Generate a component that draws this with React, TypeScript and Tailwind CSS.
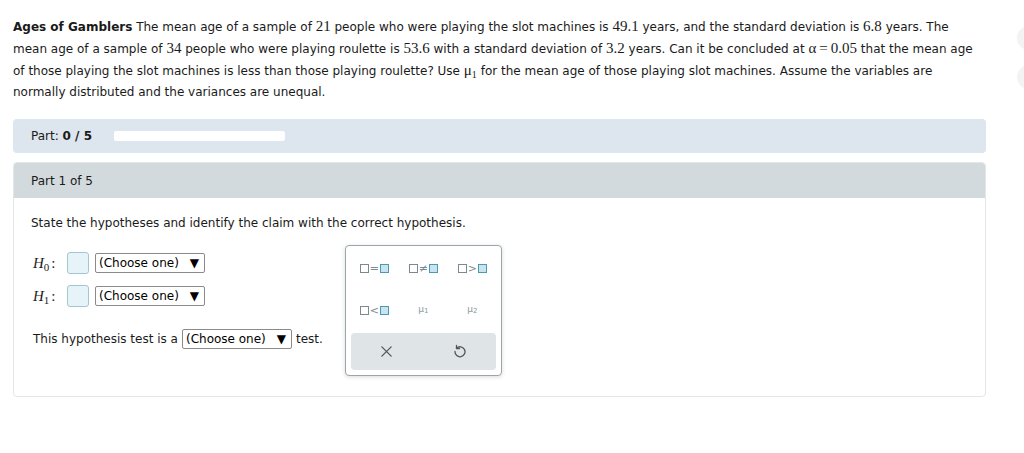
import React from "react";

const sans = { fontFamily: '"DejaVu Sans", Verdana, sans-serif' };
const serif = { fontFamily: '"Liberation Serif", "Times New Roman", serif' };

function N({ children }: { children: React.ReactNode }) {
  return (
    <span className="text-[15px]" style={serif}>
      {children}
    </span>
  );
}

function Select() {
  return (
    <div className="flex h-[20px] w-[110px] items-center justify-between rounded-[2px] border border-[#8a8a8a] bg-white pl-[3px] pr-[5px] text-[12px] text-black">
      <span>(Choose one)</span>
      <span className="text-[12px]">▼</span>
    </div>
  );
}

function Box() {
  return <div className="h-[22px] w-[22px] rounded-[3px] border border-[#a3c6d4] bg-[#e6f3f8]" />;
}

function Sq({ filled }: { filled?: boolean }) {
  return filled ? (
    <span className="inline-block h-[9px] w-[9px] border-[1.5px] border-[#4b9ab3] bg-[#c9e4ee]" />
  ) : (
    <span className="inline-block h-[9px] w-[9px] border-[1.5px] border-[#7b8a90] bg-white" />
  );
}

function Rel({ sym }: { sym: string }) {
  return (
    <div className="flex items-center justify-center gap-[1px] text-[11px] leading-none text-[#7b8a90]">
      <Sq />
      <span className="w-[9px] text-center">{sym}</span>
      <Sq filled />
    </div>
  );
}

function Mu({ sub }: { sub: string }) {
  return (
    <div className="flex items-center justify-center text-[9px] leading-none text-[#8a979c]">
      μ<span className="text-[7px] translate-y-[2px]">{sub}</span>
    </div>
  );
}

function H({ sub }: { sub: string }) {
  return (
    <div className="flex w-[34px] items-center text-[15px]" style={serif}>
      <span className="italic">H</span>
      <span className="text-[11px] translate-y-[4px]">{sub}</span>
      <span className="ml-[2px]">:</span>
    </div>
  );
}

export default function App() {
  return (
    <div className="relative h-[453px] w-[1024px] overflow-hidden bg-white text-[12px] text-[#1a1a1a]" style={sans}>
      <div className="absolute left-[1017px] top-[26px] h-[24px] w-[24px] rounded-full bg-[#f3f3f3]" />
      <div className="absolute left-[1017px] top-[65px] h-[24px] w-[24px] rounded-full bg-[#f3f3f3]" />

      <div className="px-[13px] pt-[16px]">
        <div className="whitespace-nowrap leading-[21px]">
          <div>
            <b>Ages of Gamblers</b> The mean age of a sample of <N>21</N> people who were playing the slot machines is{" "}
            <N>49.1</N> years, and the standard deviation is <N>6.8</N> years. The
          </div>
          <div>
            mean age of a sample of <N>34</N> people who were playing roulette is <N>53.6</N> with a standard deviation
            of <N>3.2</N> years. Can it be concluded at <N>α&#8201;=&#8201;0.05</N> that the mean age
          </div>
          <div>
            of those playing the slot machines is less than those playing roulette? Use{" "}
            <span style={serif} className="text-[15px]">
              μ<span className="relative top-[3px] text-[10px]">1</span>
            </span>{" "}
            for the mean age of those playing slot machines. Assume the variables are
          </div>
          <div>normally distributed and the variances are unequal.</div>
        </div>

        <div className="mt-[16px] flex h-[34px] w-[973px] items-center rounded-[4px] bg-[#dde6ee] pl-[18px]">
          <span>
            Part: <b>0 / 5</b>
          </span>
          <div className="ml-[22px] h-[10px] w-[171px] rounded-[2px] bg-white" />
        </div>

        <div className="mt-[9px] h-[235px] w-[973px] overflow-hidden rounded-[4px] border border-[#e3e7e8]">
          <div className="flex h-[35px] items-center bg-[#d3dadd] pl-[17px]">Part 1 of 5</div>
          <div className="pl-[17px] pt-[16px]">
            <p className="leading-[18px]">State the hypotheses and identify the claim with the correct hypothesis.</p>
            <div className="mt-[13px] flex gap-[22px]">
              <div className="flex flex-col pl-[2px] pt-[7px]">
                <div className="flex items-center">
                  <H sub="0" />
                  <Box />
                  <div className="ml-[6px]">
                    <Select />
                  </div>
                </div>
                <div className="mt-[10px] flex items-center">
                  <H sub="1" />
                  <Box />
                  <div className="ml-[6px]">
                    <Select />
                  </div>
                </div>
                <div className="mt-[22px] flex items-center gap-[4px]">
                  <span>This hypothesis test is a</span>
                  <Select />
                  <span>test.</span>
                </div>
              </div>

              <div className="flex h-[131px] w-[157px] flex-col rounded-[4px] border border-[#9aa6ab] bg-white shadow-[0_1px_4px_rgba(0,0,0,0.15)]">
                <div className="grid grid-cols-3 px-[4px] pt-[17px]">
                  <div className="h-[12px]"><Rel sym="=" /></div>
                  <div className="h-[12px]"><Rel sym="≠" /></div>
                  <div className="h-[12px]"><Rel sym=">" /></div>
                  <div className="mt-[30px] h-[12px]"><Rel sym="<" /></div>
                  <div className="mt-[30px] h-[12px]"><Mu sub="1" /></div>
                  <div className="mt-[30px] h-[12px]"><Mu sub="2" /></div>
                </div>
                <div className="mx-[5px] mb-[5px] mt-auto flex h-[37px] items-center justify-around rounded-[4px] bg-[#dfe4e6] text-[#555]">
                  <svg width="13" height="13" viewBox="0 0 14 14" fill="none" stroke="#555" strokeWidth="1.4" strokeLinecap="round">
                    <path d="M2 2 L12 12 M12 2 L2 12" />
                  </svg>
                  <svg width="14" height="15" viewBox="0 0 14 15" fill="none" stroke="#555" strokeWidth="1.3" strokeLinecap="round" strokeLinejoin="round">
                    <path d="M4.5 4.2 A5 5 0 1 1 3 7.5" />
                    <path d="M4.5 1.5 L4.5 4.5 L7.5 4.5" />
                  </svg>
                </div>
              </div>
            </div>
          </div>
        </div>
      </div>
    </div>
  );
}
